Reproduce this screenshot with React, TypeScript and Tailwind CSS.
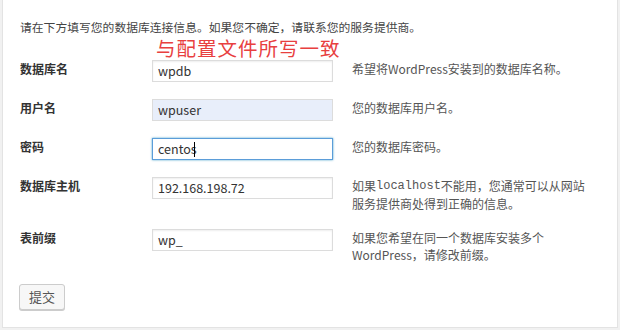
import React from "react";

const font = { fontFamily: '"Noto Sans CJK SC", "Noto Sans", sans-serif' };

type Row = {
  label: string;
  value: React.ReactNode;
  desc: React.ReactNode;
  kind?: "autofill" | "focus";
};

const rows: Row[] = [
  { label: "数据库名", value: "wpdb", desc: "希望将WordPress安装到的数据库名称。" },
  { label: "用户名", value: "wpuser", desc: "您的数据库用户名。", kind: "autofill" },
  {
    label: "密码",
    value: (
      <>
        centos
        <span className="inline-block w-px h-[15px] bg-black align-middle -ml-[3px]"></span>
      </>
    ),
    desc: "您的数据库密码。",
    kind: "focus",
  },
  {
    label: "数据库主机",
    value: "192.168.198.72",
    desc: (
      <>
        如果
        <code className="inline-block align-top leading-[18px] font-['Liberation_Mono',monospace] text-[12px]">
          localhost
        </code>
        不能用，您通常可以从网站
        <br />
        服务提供商处得到正确的信息。
      </>
    ),
  },
  {
    label: "表前缀",
    value: "wp_",
    desc: (
      <>
        如果您希望在同一个数据库安装多个
        <br />
        WordPress，请修改前缀。
      </>
    ),
  },
];

function Field({ row }: { row: Row }) {
  let cls = "border-[#dcdcdc] bg-white shadow-[inset_0_1px_2px_rgba(0,0,0,0.07)]";
  if (row.kind === "autofill") cls = "border-[#dcdcdc] bg-[#e8eefa]";
  if (row.kind === "focus") cls = "border-[#5b9dd9] bg-white shadow-[0_0_2px_rgba(30,140,190,0.8)]";
  return (
    <div
      className={`w-[181px] h-[22px] shrink-0 border flex items-center pl-[5px] text-[12.5px] text-[#333] ${cls}`}
    >
      {row.value}
    </div>
  );
}

export default function App() {
  return (
    <div className="w-[620px] h-[330px] bg-[#f1f1f1] overflow-hidden" style={font}>
      <div className="relative ml-[2px] w-[616px] h-[328px] bg-white border border-t-0 border-[#e3e3e3] pl-[17px] pt-[18px]">
        <p className="text-[11.8px] leading-[17px] text-[#444]">
          请在下方填写您的数据库连接信息。如果您不确定，请联系您的服务提供商。
        </p>

        <div className="absolute left-[153px] top-[36px] text-[19.5px] leading-[24px] text-[#e8403f] tracking-[1px]">
          与配置文件所写一致
        </div>

        <div className="mt-[17px]">
          {rows.map((row) => (
            <div key={row.label} className="flex items-start pt-[8px] pb-[9px]">
              <div className="w-[132px] shrink-0 text-[12px] leading-[17px] font-semibold text-[#333]">
                {row.label}
              </div>
              <Field row={row} />
              <div className="ml-[19px] w-[250px] text-[12px] leading-[17px] text-[#555]">{row.desc}</div>
            </div>
          ))}
        </div>

        <button className="mt-[12px] ml-[-1px] w-[46px] h-[26px] border border-[#cccccc] bg-[#f7f7f7] rounded-[3px] shadow-[0_1px_0_#cccccc] text-[13px] text-[#555]">
          提交
        </button>
      </div>
    </div>
  );
}
